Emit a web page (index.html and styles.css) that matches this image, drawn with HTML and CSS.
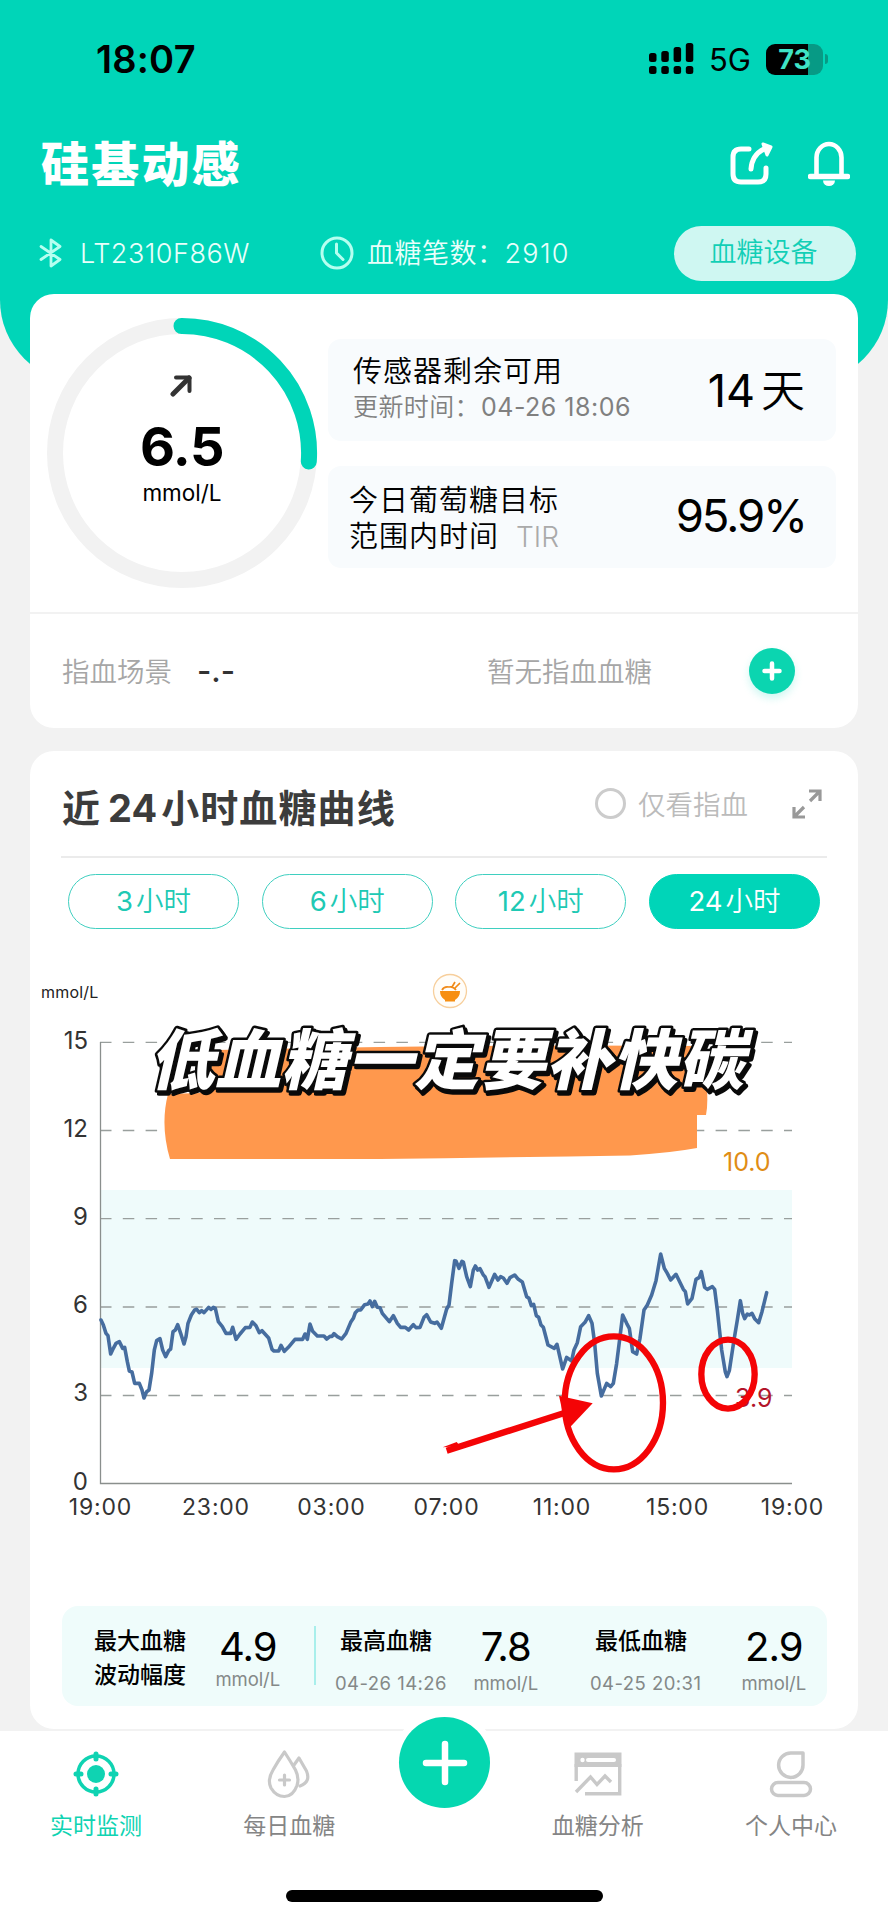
FILE: index.html
```html
<!DOCTYPE html>
<html lang="zh-CN">
<head>
<meta charset="utf-8">
<title>硅基动感</title>
<link rel="stylesheet" href="styles.css">
</head>
<body>
<div class="screen">
  <header class="header">
    <div class="status">
      <span class="status-time">18:07</span>
      <div class="status-right">
        <svg class="signal" width="45" height="32" viewBox="0 0 45 32">
          <rect x="0" y="10" width="7.5" height="9" rx="2.5"/><rect x="12.3" y="8" width="7.5" height="11" rx="2.5"/><rect x="24.6" y="4" width="7.5" height="15" rx="2.5"/><rect x="36.8" y="0" width="7.5" height="19" rx="2.5"/>
          <rect x="0" y="23" width="7.5" height="8" rx="2.5"/><rect x="12.3" y="23" width="7.5" height="8" rx="2.5"/><rect x="24.6" y="23" width="7.5" height="8" rx="2.5"/><rect x="36.8" y="23" width="7.5" height="8" rx="2.5"/>
        </svg>
        <span class="network">5G</span>
        <div class="battery"><span class="battery-level">73</span></div>
        <span class="battery-tip"></span>
      </div>
    </div>
    <div class="brand-row">
      <h1 class="brand">硅基动感</h1>
      <div class="brand-actions">
        <svg width="44" height="44" viewBox="0 0 44 44" fill="none" stroke="#fff" stroke-width="5" stroke-linecap="round" stroke-linejoin="round">
          <path d="M19 8H11Q3 8 3 16V33Q3 41 11 41H28Q36 41 36 33V27"/>
          <path d="M21 28Q22 14 34 8"/>
          <path d="M33 3L41 6L37 14Z" fill="#fff" stroke-width="3"/>
        </svg>
        <svg width="42" height="46" viewBox="0 0 42 46" fill="none" stroke="#fff" stroke-width="4.6" stroke-linecap="round">
          <path d="M8.500 35V16.500A12.500 13.500 0 0 1 33.500 16.500V35"/>
          <path d="M2.500 35.500H39.500" stroke-width="5.500"/>
          <path d="M15 39.500H27A6 5.500 0 0 1 15 39.500Z" fill="#fff" stroke="none"/>
        </svg>
      </div>
    </div>
    <div class="device-row">
      <svg class="bt" width="24" height="30" viewBox="0 0 24 30" fill="none" stroke="#b5fff0" stroke-width="2.800" stroke-linejoin="round" stroke-linecap="round">
        <path d="M2 8.500L21 21.500L12 28V2L21 8.500L2 21.500"/>
      </svg>
      <span class="device-id">LT2310F86W</span>
      <svg class="clock" width="34" height="34" viewBox="0 0 34 34" fill="none" stroke="#b5fff0" stroke-width="3" stroke-linecap="round">
        <circle cx="17" cy="17" r="15"/><path d="M16.500 8V17L23 23.500"/>
      </svg>
      <span class="count">血糖笔数：<span class="count-num">2910</span></span>
      <a class="device-btn">血糖设备</a>
    </div>
  </header>

  <main class="main">
    <section class="card summary">
      <div class="summary-top">
        <div class="ring">
          <svg class="ring-svg" width="272" height="272" viewBox="0 0 272 272" fill="none" stroke-width="16">
            <circle cx="136" cy="136" r="127" stroke="#f2f2f2"/>
            <path d="M135.500 9A127 127 0 0 1 262.800 144.500" stroke="#00d5b8" stroke-linecap="round"/>
          </svg>
          <svg class="trend" width="24" height="24" viewBox="0 0 24 24" fill="none" stroke="#333" stroke-width="5">
            <path d="M3 21L19 5" stroke-linecap="round"/><path d="M6 4.500H19.500V18" stroke-linecap="round" stroke-linejoin="round" stroke-width="4"/>
          </svg>
          <strong class="reading">6.5</strong>
          <span class="reading-unit">mmol/L</span>
        </div>
        <div class="infos">
          <div class="info">
            <div class="info-text"><p class="info-title">传感器剩余可用</p><p class="info-sub">更新时间：<span class="info-date">04-26 18:06</span></p></div>
            <span class="info-value days">14<span class="day-unit">天</span></span>
          </div>
          <div class="info info-tir">
            <div class="info-text"><p class="info-title">今日葡萄糖目标</p><p class="info-title">范围内时间<span class="tir">TIR</span></p></div>
            <span class="info-value pct">95.9%</span>
          </div>
        </div>
      </div>
      <div class="finger">
        <span class="finger-label">指血场景</span>
        <span class="finger-value">-.-</span>
        <span class="finger-none">暂无指血血糖</span>
        <a class="add"><svg width="20" height="20" viewBox="0 0 20 20" stroke="#fff" stroke-width="4.500" stroke-linecap="round"><path d="M10 2.500V17.500M2.500 10H17.500"/></svg></a>
      </div>
    </section>

    <section class="card curve">
      <div class="curve-head">
        <h2 class="curve-title">近<span class="num">24</span>小时血糖曲线</h2>
        <span class="radio"></span>
        <span class="radio-label">仅看指血</span>
        <svg class="expand" width="30" height="30" viewBox="0 0 30 30" fill="none" stroke="#999" stroke-width="3.200">
          <path d="M17 2H28V12M28 2L18 12M13 28H2V18M2 28L12 18"/>
        </svg>
      </div>
      <nav class="ranges">
        <a class="range"><span class="num">3</span>小时</a>
        <a class="range"><span class="num">6</span>小时</a>
        <a class="range"><span class="num">12</span>小时</a>
        <a class="range active"><span class="num">24</span>小时</a>
      </nav>
      <svg class="chart" width="828" height="610" viewBox="30 950 828 610">
        <rect x="101" y="1190" width="691" height="178" fill="#effbfb"/>
        <g stroke="#999f9d" stroke-width="1.300" stroke-dasharray="11.500 11.300">
          <path d="M100 1042.300H792"/><path d="M100 1130.500H792"/><path d="M100 1218.700H792"/><path d="M100 1307H792"/><path d="M100 1395.500H792"/>
        </g>
        <path d="M100.500 1042V1483.500H792" fill="none" stroke="#8a8f8d" stroke-width="1.300"/>
        <g class="ylab">
          <text x="88" y="1048.500">15</text><text x="88" y="1136.500">12</text><text x="88" y="1224.500">9</text><text x="88" y="1313">6</text><text x="88" y="1401">3</text><text x="88" y="1489.500">0</text>
        </g>
        <g class="xlab">
          <text x="100.500" y="1514.500">19:00</text><text x="216" y="1514.500">23:00</text><text x="331.500" y="1514.500">03:00</text><text x="446.500" y="1514.500">07:00</text><text x="562" y="1514.500">11:00</text><text x="677.500" y="1514.500">15:00</text><text x="792.500" y="1514.500">19:00</text>
        </g>
        <text class="unit" x="41" y="998">mmol/L</text>
        <text class="high" x="723" y="1170.500">10.0</text>
        <text class="low" x="735" y="1406.500">3.9</text>
        <g transform="translate(60 1160) scale(.33333)">
          <polyline fill="none" stroke="#466d9f" stroke-width="10.800" stroke-linejoin="round" stroke-linecap="round" points="123,480 130,495 138,520 144,527 152,582 160,565 168,550 178,545 188,565 194,562 202,605 208,633 216,636 224,670 238,670 246,690 252,714 260,695 267,690 275,640 283,570 290,542 300,536 308,570 317,590 326,572 332,567 339,515 346,510 353,494 362,520 372,552 378,530 384,490 394,465 404,450 410,448 418,458 425,452 432,458 446,442 453,448 460,442 466,445 475,485 487,500 498,520 512,520 518,502 528,538 540,522 556,503 570,502 577,486 588,497 598,518 606,512 626,534 636,568 642,573 656,573 663,556 673,574 685,562 705,538 728,538 735,522 742,538 750,492 758,514 772,528 792,528 800,537 810,529 816,529 822,521 832,530 845,537 858,520 872,487 880,475 886,458 894,450 902,450 914,434 924,432 930,423 937,440 944,424 952,442 960,443 967,460 988,485 1000,467 1012,490 1022,502 1036,502 1046,510 1060,494 1068,503 1080,502 1092,472 1100,464 1112,486 1124,490 1131,486 1144,505 1160,447 1167,435 1175,370 1184,302 1188,303 1197,325 1206,304 1210,306 1220,350 1231,380 1240,330 1246,318 1253,330 1260,326 1270,345 1275,350 1287,382 1304,343 1314,360 1322,350 1330,354 1341,370 1350,353 1364,345 1375,358 1387,366 1400,410 1407,415 1414,437 1421,433 1429,467 1436,472 1443,495 1450,502 1464,555 1483,565 1491,553 1508,627 1520,592 1535,603 1542,570 1552,548 1562,500 1575,487 1586,467 1596,490 1604,550 1612,640 1624,708 1640,670 1652,680 1660,670 1670,610 1680,530 1688,465 1700,490 1708,505 1718,575 1730,582 1740,535 1752,450 1762,435 1775,405 1788,362 1802,282 1813,325 1822,340 1832,360 1848,343 1870,388 1876,395 1883,432 1896,415 1908,358 1918,352 1924,335 1934,382 1942,388 1957,380 1964,388 1972,450 1985,570 1996,636 2001,650 2008,632 2022,540 2032,480 2041,422 2048,460 2054,476 2062,462 2068,465 2076,460 2084,476 2096,488 2106,455 2120,398"/>
          <g fill="none" stroke="#f40406" stroke-width="19">
            <ellipse cx="1661.500" cy="728.500" rx="147.500" ry="199.500"/>
            <ellipse cx="2004" cy="642.500" rx="80" ry="103.500"/>
            <path d="M1160 872L1520 757"/>
          </g>
          <path d="M1497 707L1598 730L1520 812Z" fill="#f40406"/>
          <path d="M1148 862L1190 846L1200 858Z" fill="#f40406"/>
        </g>
        <g transform="translate(450 991)">
          <circle r="16.500" fill="#fffdf9" stroke="#f7cf9c" stroke-width="1.300"/>
          <path d="M-10 0H10Q10 6 5 9V10.500H-5V9Q-10 6 -10 0Z" fill="#f78f12"/>
          <path d="M-8 -1Q-6 -5 -1 -4Q3 -5 6 -1M2 -4L5 -9M5 -3L10 -8" fill="none" stroke="#f08a18" stroke-width="1.700"/>
        </g>
        <path d="M219 1050Q450 1044 707 1046V1090Q708 1105 706 1115H697V1148Q670 1153 630 1155.500Q500 1157.500 380 1159H170Q160 1125 168 1094L200 1093Z" fill="#ff984d"/>
        <g transform="translate(149 1083.500) skewX(-13)">
          <text class="headline headline-shadow" x="3" y="3" textLength="595">低血糖一定要补快碳</text>
          <text class="headline" x="0" y="0" textLength="595">低血糖一定要补快碳</text>
        </g>
      </svg>
      <div class="stats">
        <div class="stat stat-range">
          <p class="stat-title">最大血糖<br>波动幅度</p>
          <p class="stat-num"><b class="stat-value">4.9</b><span class="stat-unit">mmol/L</span></p>
        </div>
        <div class="stat stat-max">
          <p class="stat-label"><span class="stat-title">最高血糖</span><span class="stat-date">04-26 14:26</span></p>
          <p class="stat-num"><b class="stat-value">7.8</b><span class="stat-unit">mmol/L</span></p>
        </div>
        <div class="stat stat-min">
          <p class="stat-label"><span class="stat-title">最低血糖</span><span class="stat-date">04-25 20:31</span></p>
          <p class="stat-num"><b class="stat-value">2.9</b><span class="stat-unit">mmol/L</span></p>
        </div>
      </div>
    </section>
  </main>

  <footer class="tabbar">
    <a class="tab on">
      <svg width="50" height="50" viewBox="0 0 50 50" fill="none" stroke="#0fd3b2" stroke-width="3.500" stroke-linecap="round">
        <circle cx="25" cy="25" r="18"/><circle cx="25" cy="25" r="9" fill="#0fd3b2" stroke="none"/>
        <path d="M25 5V10M25 40V45M5 25H10M40 25H45" stroke-width="5"/>
      </svg>
      <span>实时监测</span>
    </a>
    <a class="tab">
      <svg width="50" height="50" viewBox="0 0 50 50" fill="none" stroke="#c9c9c9" stroke-width="3.200" stroke-linejoin="round" stroke-linecap="round">
        <path d="M20.500 3Q27 13 31.500 21Q35.500 29 33 36.500Q29 47.500 20.500 47.500Q12 47.500 7 39Q3 31 9 21Q14 12 20.500 3Z"/>
        <path d="M30 16L35 9Q39 16 42.500 22Q47 33 36 37"/><path d="M20.500 26V36M15.500 31H25.500"/>
      </svg>
      <span>每日血糖</span>
    </a>
    <span class="tab-gap"></span>
    <a class="tab">
      <svg width="50" height="50" viewBox="0 0 50 50" fill="none" stroke="#c9c9c9" stroke-width="3.400">
        <path d="M1.500 3.500H48.500V18H1.500Z" fill="#c9c9c9" stroke="none"/><path d="M15 11H41" stroke="#fff" stroke-width="4" stroke-linecap="round"/><circle cx="9.500" cy="11" r="2.200" fill="#fff" stroke="none"/>
        <path d="M3.200 15V32M46.700 15V44.700H12"/><path d="M3 43L17.500 28L24 35.500L32 27L38 33"/>
      </svg>
      <span>血糖分析</span>
    </a>
    <a class="tab">
      <svg width="50" height="50" viewBox="0 0 50 50" fill="none" stroke="#c9c9c9" stroke-width="3.500" stroke-linejoin="round">
        <path d="M25 4H37V16A12.200 12.200 0 1 1 25 4Z"/><rect x="5.500" y="33.500" width="39" height="13" rx="6.500"/>
      </svg>
      <span>个人中心</span>
    </a>
    <a class="fab"><svg width="46" height="46" viewBox="0 0 46 46" stroke="#fff" stroke-width="6.500" stroke-linecap="round"><path d="M23 4V42M4 23H42"/></svg></a>
    <i class="home"></i>
  </footer>
</div>
</body>
</html>
```

FILE: styles.css
```css
* { box-sizing: border-box; margin: 0; padding: 0; }
body { background: #f2f2f2; font-family: "Inter", "Noto Sans CJK SC", sans-serif; color: #000; }
.screen { width: 888px; height: 1920px; overflow: hidden; display: flex; flex-direction: column; background: #f2f2f2; }
svg { display: block; flex: none; }
span, a, p, h1, h2, strong { white-space: nowrap; }

.header { height: 383px; flex: none; background: #00d5b8; border-radius: 0 0 83px 83px; padding-top: 37px; color: #fff; }
.status { display: flex; justify-content: space-between; align-items: center; height: 44px; padding: 0 60px 0 96px; color: #000; }
.status-time { font-size: 38px; font-weight: 600; letter-spacing: .2px; }
.status-right { display: flex; align-items: center; }
.network { font-size: 31px; font-weight: 400; margin: 0 15px 0 15px; letter-spacing: 0; }
.battery { width: 57px; height: 31px; border-radius: 9px; background: linear-gradient(90deg, #000 73%, #079a85 73%); display: flex; align-items: center; justify-content: center; }
.battery-level { font-size: 27px; font-weight: 700; color: #3fe3c6; line-height: 31px; }
.battery-tip { width: 3px; height: 10px; margin-left: 2px; border-radius: 0 4px 4px 0; background: #079a85; }
.brand-row { display: flex; align-items: center; justify-content: space-between; height: 56px; margin-top: 55px; padding: 0 38px 0 41px; }
.brand { font-size: 48px; line-height: 56px; font-weight: 900; letter-spacing: 2.200px; padding-top: 2px; }
.brand-actions { display: flex; gap: 34px; }
.device-row { display: flex; align-items: center; height: 56px; margin-top: 33px; padding: 0 32px 0 39px; color: #e9fffb; }
.device-id { font-size: 27px; font-weight: 300; margin-left: 17px; width: 170px; letter-spacing: .5px; }
.clock { margin-left: 70px; }
.count { margin: -3px 0 0 13px; font-size: 27px; font-weight: 350; letter-spacing: .5px; }
.count-num { font-weight: 300; letter-spacing: 1.300px; }
.device-btn { margin-left: auto; width: 182px; height: 55px; line-height: 54px; border-radius: 28px; background: #cff7f2; color: #12cfb6; font-size: 27px; text-align: center; font-weight: 350; padding-right: 3px; }

.main { margin-top: -89px; padding: 0 30px; flex: none; }
.card { background: #fff; border-radius: 24px; }
.summary { height: 434px; }
.summary-top { height: 320px; display: flex; border-bottom: 2px solid #f2f2f2; }
.ring { width: 272px; height: 272px; margin: 23px 0 0 16px; display: grid; grid-template: 100% / 100%; flex: none; }
.ring > * { grid-area: 1 / 1; justify-self: center; }
.trend { margin-top: 56px; }
.reading { font-size: 54px; font-weight: 700; line-height: 60px; margin-top: 100px; letter-spacing: -.5px; }
.reading-unit { font-size: 22.500px; line-height: 28px; margin-top: 162px; }
.infos { margin: 45px 0 0 10px; width: 508px; display: flex; flex-direction: column; gap: 25px; }
.info { height: 102px; border-radius: 13px; background: #f8fbfd; padding: 15px 31px 0 25px; display: flex; justify-content: space-between; }
.info-title { font-size: 29px; line-height: 36px; font-weight: 350; letter-spacing: 1px; }
.info-sub { font-size: 25px; line-height: 35px; color: #808080; font-weight: 350; letter-spacing: .4px; }
.info-date { font-weight: 400; letter-spacing: .5px; margin-left: 1px; }
.info-value { font-size: 45px; line-height: 74px; font-weight: 400; }
.day-unit { font-size: 44px; font-weight: 350; margin-left: 6px; }
.info-tir { padding-left: 21px; padding-top: 17px; padding-right: 30px; }
.tir { color: #aaa; font-size: 28px; letter-spacing: 0; margin-left: 17px; }
.pct { font-size: 45.500px; letter-spacing: -2px; line-height: 66px; }
.finger { display: flex; align-items: center; height: 112px; padding: 0 63px 0 32px; }
.finger-label { font-size: 27.500px; font-weight: 350; color: #a6a6a6; width: 135px; }
.finger-value { font-size: 31px; font-weight: 500; color: #333; }
.finger-none { font-size: 27.500px; font-weight: 350; color: #a6a6a6; margin-left: auto; margin-right: 97px; }
.add { width: 46px; height: 46px; border-radius: 50%; background: #0bd5b0; display: flex; align-items: center; justify-content: center; box-shadow: 0 4px 8px rgba(0, 213, 184, .2); margin-top: 2px; }

.curve { margin-top: 23px; height: 978px; display: flex; flex-direction: column; }
.curve-head { height: 107px; margin: 0 31px; border-bottom: 2px solid #ebebeb; display: flex; align-items: center; padding-right: 5px; }
.curve-title { font-size: 38px; font-weight: 700; color: #3c3c3c; margin-right: auto; padding-top: 3px; letter-spacing: 1.100px; padding-left: 1px; }
.curve-title .num { margin: 0 4px 0 7px; letter-spacing: 0; }
.radio { width: 31px; height: 31px; border: 3px solid #ccc; border-radius: 50%; }
.radio-label { color: #bbb; font-size: 27.500px; font-weight: 350; margin: -2px 44px 0 12px; }
.ranges { display: flex; justify-content: space-between; padding: 16px 38px 0; }
.range { width: 171px; height: 55px; line-height: 53px; border: 1.500px solid #3fcfc0; border-radius: 28px; color: #20c9b4; font-size: 27.500px; text-align: center; font-weight: 350; }
.range .num { font-weight: 400; margin-right: 3px; }
.range.active { background: #00d5b8; color: #fff; border-color: #00d5b8; }
.chart { margin-top: 21px; }
.ylab { font-size: 24px; fill: #333; text-anchor: end; font-weight: 400; }
.xlab { font-size: 23px; fill: #333; text-anchor: middle; letter-spacing: .8px; }
.unit { font-size: 16px; fill: #222; letter-spacing: .2px; }
.high { font-size: 25px; fill: #df8d15; }
.low { font-size: 25px; fill: #b3142a; }
.headline { font-size: 65.500px; font-weight: 900; fill: #fff; stroke: #0a0a0a; stroke-width: 5px; paint-order: stroke; stroke-linejoin: round; }
.headline-shadow { fill: #0a0a0a; }
.stats { height: 100px; margin: 46px 31px 0 32px; border-radius: 16px; background: #effcfb; display: flex; }
.stat { display: flex; justify-content: space-between; padding-top: 18px; }
.stat-title { font-size: 23px; line-height: 34px; font-weight: 500; }
.stat-range { width: 254px; height: 59px; margin-top: 20px; padding: 0 34px 0 32px; border-right: 2px solid #a8efeb; }
.stat-range .stat-title { margin-top: -2px; }
.stat-range .stat-num { margin-top: -2px; }
.stat-range .stat-unit { margin-top: -3px; }
.stat-max { width: 203px; margin-left: 19px; }
.stat-min { width: 216px; margin-left: 52px; }
.stat-label { display: flex; flex-direction: column; }
.stat-label .stat-title { padding-left: 5px; }
.stat-date { font-size: 18.500px; line-height: 24px; color: #848988; font-weight: 400; margin-top: 13px; letter-spacing: .45px; }
.stat-num { display: flex; flex-direction: column; align-items: center; }
.stat-value { font-size: 40px; font-weight: 400; line-height: 46px; letter-spacing: -1px; }
.stat-unit { font-size: 18.500px; line-height: 24px; color: #848988; font-weight: 400; letter-spacing: -.1px; margin-top: 1px; }

.tabbar { position: relative; height: 190px; margin-top: 2px; background: #fff; display: flex; justify-content: space-between; padding: 18px 51px 0 50px; flex: none; }
.tab { width: 92px; display: flex; flex-direction: column; align-items: center; font-size: 23px; line-height: 34px; color: #858585; gap: 10px; font-weight: 400; }
.tab.on { color: #0fd3b2; }
.tab-gap { width: 14px; }
.fab { position: absolute; left: 399px; top: -14px; width: 91px; height: 91px; border-radius: 50%; background: #05d7b0; box-shadow: 0 0 0 7px #fff; display: flex; align-items: center; justify-content: center; }
.home { position: absolute; left: 286px; top: 159px; width: 317px; height: 12px; border-radius: 6px; background: #000; }
```
